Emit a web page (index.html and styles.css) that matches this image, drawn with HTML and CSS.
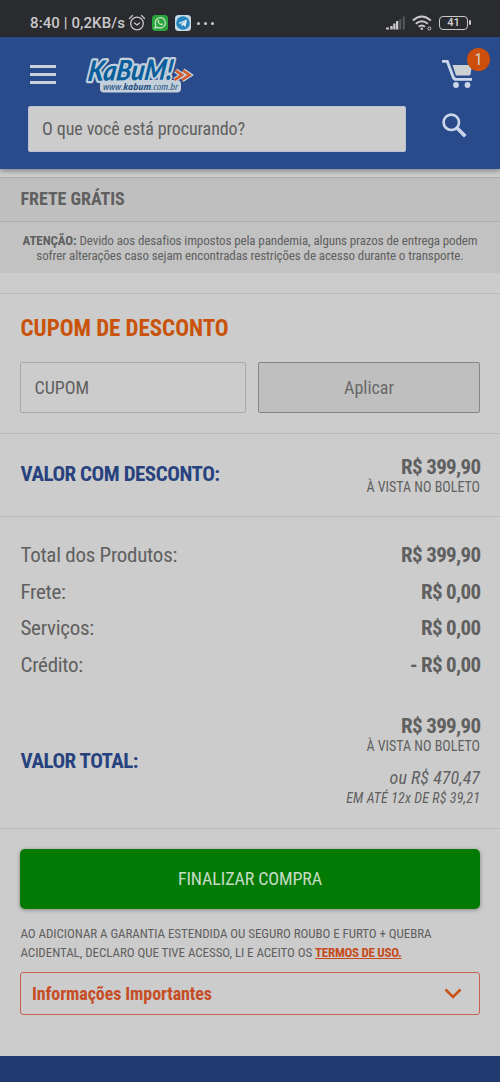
FILE: index.html
```html
<!DOCTYPE html>
<html lang="pt-BR">
<head>
<meta charset="utf-8">
<title>KaBuM! - Carrinho</title>
<link rel="stylesheet" href="styles.css">
</head>
<body>
<div class="status">
  <span class="clock">8:40 | 0,2KB/s</span>
  <svg class="alarm" width="18" height="18" viewBox="0 0 18 18" fill="none" stroke="#c9c9cb" stroke-width="1.3" stroke-linecap="round"><circle cx="9" cy="9.5" r="6.3"/><path d="M6.500 9l2.500 2 2.500-2M1.500 4.500l3-3M16.500 4.500l-3-3"/></svg>
  <svg class="whats" width="16" height="16" viewBox="0 0 16 16"><rect width="16" height="16" rx="3.500" fill="#2ba43c"/><path d="M3 13l.8-2.800A5.100 5.100 0 1 1 5.700 12.200z" fill="none" stroke="#cfe6d0" stroke-width="1.200"/><path d="M5.800 5.200c.7-.8 1.100 0 1.500 1l-.5.800c.5 1 1 1.500 2.100 2l.8-.7c1 .4 1.700.8 1 1.500-1.500 1.500-6.100-2-4.900-4.600z" fill="#cfe6d0"/></svg>
  <svg class="tele" width="16" height="16" viewBox="0 0 16 16"><rect width="16" height="16" rx="3.500" fill="#c4d8e6"/><circle cx="8" cy="8" r="6.800" fill="#2785bd"/><path d="M3.300 7.900l8.700-3.500-1.400 7.500-2.600-1.900-1.300 1.300-.4-2.300 3.700-3-4.600 2.700z" fill="#dce8ef"/></svg>
  <span class="dots"><i></i><i></i><i></i></span>
  <svg class="signal" width="20" height="14" viewBox="0 0 20 14"><path d="M0 11.500h3v2H0zM4.200 10h2.500v3.500H4.200zM7.200 7.500h2.300v6H7.200zM10 5h2.300v8.500H10z" fill="#c9c9cb"/><path d="M13.300 3h2v10.500h-2zM16.800.5h2v13h-2z" fill="#57585b"/></svg>
  <svg class="wifi" width="20" height="16" viewBox="0 0 20 16" fill="none" stroke="#c9c9cb" stroke-width="1.900"><path d="M.8 5.500q9-8 18 0M3.800 8.800q6-5.300 12 0M6.600 11.800q3.200-2.700 6.400 0"/><circle cx="9.800" cy="13.700" r="1.300" fill="#c9c9cb" stroke="none"/><circle cx="17.300" cy="13.500" r="1.500" stroke-width="1"/></svg>
  <span class="battery">41</span>
</div>
<header class="header">
  <div class="topbar">
    <div class="menu"><i></i><i></i><i></i></div>
    <svg class="logo" width="112" height="46" viewBox="0 0 112 46">
      <rect x="18" y="29" width="81" height="12.500" rx="4" fill="#c3d0db"/>
      <text transform="translate(5 30) rotate(-1) skewX(-9)" font-family="Lato, sans-serif" font-style="italic" font-weight="900" font-size="28" textLength="85" lengthAdjust="spacingAndGlyphs" fill="#095e9c" stroke="#c3d0db" stroke-width="4.500" stroke-linejoin="round" paint-order="stroke">KaBuM!</text>
      <path d="M93.500 19.500l6.500 4.500-7.500 5M101 19.500l6.500 4.500-7.500 5" fill="none" stroke="#c3d0db" stroke-width="5"/>
      <path d="M93.500 19.500l6.500 4.500-7.500 5M101 19.500l6.500 4.500-7.500 5" fill="none" stroke="#d55b28" stroke-width="2.600"/>
      <text x="21" y="38.500" font-family="Open Sans, sans-serif" font-style="italic" font-size="9" textLength="75" lengthAdjust="spacingAndGlyphs" fill="#285483">www.<tspan font-weight="700">kabum</tspan>.com.br</text>
    </svg>
    <div class="cart">
      <svg width="30" height="28" viewBox="0 0 30 28" fill="#cbd6ea"><path d="M0 0h6.300l6.200 16.500L14 18h16v2.800H12.500L10.400 19 4.300 2.800H0z"/><path d="M10.500 5H30l-1.500 9.500-1 1H14z" fill="#cdd0d3"/><circle cx="14" cy="25" r="2.900"/><circle cx="25.500" cy="25" r="2.900"/></svg>
      <span class="badge">1</span>
    </div>
  </div>
  <div class="searchbar">
    <div class="search"><span>O que você está procurando?</span></div>
    <svg class="lens" width="25" height="25" viewBox="0 0 25 25" fill="none" stroke="#cbd6ea"><circle cx="9.300" cy="9.300" r="7.700" stroke-width="2.700"/><path d="M15 15l8.300 8.300" stroke-width="3.600"/></svg>
  </div>
</header>
<main>
  <h2 class="frete">FRETE GRÁTIS</h2>
  <p class="notice"><b>ATENÇÃO:</b> Devido aos desafios impostos pela pandemia, alguns prazos de entrega podem<br>sofrer alterações caso sejam encontradas restrições de acesso durante o transporte.</p>
  <section class="coupon">
    <h1>CUPOM DE DESCONTO</h1>
    <div class="form"><div class="input">CUPOM</div><div class="apply">Aplicar</div></div>
  </section>
  <section class="discount">
    <h3>VALOR COM DESCONTO:</h3>
    <div class="amount"><strong>R$ 399,90</strong><small>À VISTA NO BOLETO</small></div>
  </section>
  <section class="totals">
    <div class="row"><span>Total dos Produtos:</span><strong>R$ 399,90</strong></div>
    <div class="row"><span>Frete:</span><strong>R$ 0,00</strong></div>
    <div class="row"><span>Serviços:</span><strong>R$ 0,00</strong></div>
    <div class="row"><span>Crédito:</span><strong>- R$ 0,00</strong></div>
    <div class="grand">
      <h3>VALOR TOTAL:</h3>
      <div class="amount"><strong>R$ 399,90</strong><small>À VISTA NO BOLETO</small><em>ou R$ 470,47</em><em class="parts">EM ATÉ 12x DE R$ 39,21</em></div>
    </div>
  </section>
  <section class="checkout">
    <div class="finish">FINALIZAR COMPRA</div>
    <p class="terms">AO ADICIONAR A GARANTIA ESTENDIDA OU SEGURO ROUBO E FURTO + QUEBRA<br>ACIDENTAL, DECLARO QUE TIVE ACESSO, LI E ACEITO OS <a>TERMOS DE USO.</a></p>
    <div class="info"><span>Informações Importantes</span><svg width="18" height="12" viewBox="0 0 18 12" fill="none" stroke="#c95316" stroke-width="2.600"><path d="M1.500 1.500L9 9l7.500-7.500"/></svg></div>
  </section>
</main>
<footer></footer>
</body>
</html>
```
FILE: styles.css
```css
* { box-sizing: border-box; margin: 0; padding: 0; }
body { width: 500px; height: 1082px; overflow: hidden; display: flex; flex-direction: column; background: #ccc; color: #606060; font-family: "Roboto Condensed", Roboto, sans-serif; font-stretch: 75%; }
.status { height: 37px; flex: none; background: #2a2b2e; color: #c9c9cb; display: flex; align-items: center; padding: 9px 30px 0; font-family: Roboto, sans-serif; font-stretch: 100%; }
.clock { font-size: 15px; letter-spacing: .1px; font-weight: 500; width: 98px; white-space: nowrap; }
.whats { margin-left: 6px; }
.tele { margin-left: 7px; }
.dots { display: flex; gap: 4px; margin-left: 6px; }
.dots i { width: 3px; height: 3px; border-radius: 50%; background: #c9c9cb; }
.signal { margin-left: auto; }
.wifi { margin-left: 6px; }
.battery { position: relative; width: 29px; height: 14px; margin: 0 2px 0 7px; border: 1.500px solid #c9c9cb; border-radius: 4px; font-size: 11px; line-height: 12px; font-weight: 600; text-align: center; }
.battery::after { content: ""; position: absolute; right: -4px; top: 3px; width: 2px; height: 5px; background: #c9c9cb; border-radius: 1px; }
.header { height: 132px; flex: none; background: #2a4b8b; padding: 14px 24px 0 28px; box-shadow: 0 2px 5px rgba(0,0,0,.35); position: relative; }
.topbar { height: 55px; display: flex; align-items: flex-start; }
.logo { overflow: visible; }
.menu { display: flex; flex-direction: column; gap: 5px; padding: 14px 0 0 2px; width: 54px; }
.menu i { width: 26px; height: 3px; background: #c9cfdb; }
.cart { position: relative; margin: 9px 4px 0 auto; }
.badge { position: absolute; left: 25px; top: -12px; width: 23px; height: 23px; border-radius: 50%; background: #cb4f0a; color: #d8cfca; font-size: 16px; line-height: 23px; text-align: center; }
.searchbar { display: flex; justify-content: space-between; }
.search { width: 378px; height: 46px; background: #ccc; border: 1px solid #b9c1d0; border-radius: 2px; padding-left: 13px; font-size: 18px; letter-spacing: -.1px; line-height: 44px; }
.lens { margin: 7px 9px 0 0; }
main { display: flex; flex-direction: column; padding-top: 8px; }
.frete { height: 45px; border: solid #adadad; border-width: 1px 0; background: #bfbfbf; padding-left: 20.500px; font-size: 18px; letter-spacing: -.05px; line-height: 42px; }
.notice { height: 51px; background: #c2c2c2; font-size: 13px; letter-spacing: -.1px; line-height: 15px; padding-top: 11px; text-align: center; white-space: nowrap; }
.coupon { margin-top: 20px; height: 140px; border-top: 1px solid #b9b9b9; padding: 20px 20px 0; }
h1 { color: #c9530b; font-size: 23px; letter-spacing: -.05px; line-height: 28px; padding: 1px 0 0 .5px; height: 28px; }
.form { display: flex; gap: 12px; margin-top: 20px; }
.input, .apply { height: 51px; border-radius: 2px; font-size: 18px; line-height: 49px; }
.input { width: 226px; border: 1px solid #a9a9a9; padding-left: 13.500px; }
.apply { width: 222px; border: 1px solid #858585; background: #bfbfbf; text-align: center; color: #696969; }
.discount { height: 83px; border-top: 1px solid #b7b7b7; padding: 22px 20px 0 20.500px; display: flex; justify-content: space-between; }
h3 { font-size: 21px; line-height: 26px; letter-spacing: -.47px; color: #28427e; }
.discount h3 { padding-top: 5px; }
.amount { display: flex; flex-direction: column; align-items: flex-end; }
strong { font-size: 21px; line-height: 22px; letter-spacing: -.65px; margin-right: -.5px; }
small { font-size: 14px; line-height: 18px; }
.totals { height: 312px; border-top: 1px solid #bababa; padding: 20px 20px 0 20.500px; }
.row { height: 36.500px; display: flex; justify-content: space-between; align-items: center; font-size: 21px; letter-spacing: -.27px; }
.grand { display: flex; justify-content: space-between; padding-top: 32px; }
.grand h3 { padding-top: 33px; }
em { font-size: 18px; line-height: 22px; margin-top: 12px; letter-spacing: .05px; }
.parts { font-size: 14px; line-height: 18px; margin-top: 0; letter-spacing: .13px; }
.checkout { height: 228px; border-top: 1px solid #bababa; padding: 20px 20px 0; }
.finish { height: 60px; background: #037a03; border-radius: 5px; box-shadow: 0 1px 4px rgba(0,0,0,.35); color: #c5dcc5; text-align: center; font-size: 18px; letter-spacing: -.12px; line-height: 60px; }
.terms { font-size: 13px; letter-spacing: -.06px; line-height: 19px; padding: 15px 0 0 .5px; white-space: nowrap; }
.terms a { color: #c64c20; font-weight: 700; letter-spacing: -.28px; text-decoration: underline; }
.info { height: 43px; margin-top: 10px; border: 1px solid #c46352; border-radius: 3px; display: flex; justify-content: space-between; align-items: center; padding: 0 17px 0 11px; color: #c64d25; font-size: 18px; letter-spacing: -.1px; font-weight: 700; }
footer { height: 26px; background: #20396e; }
```
